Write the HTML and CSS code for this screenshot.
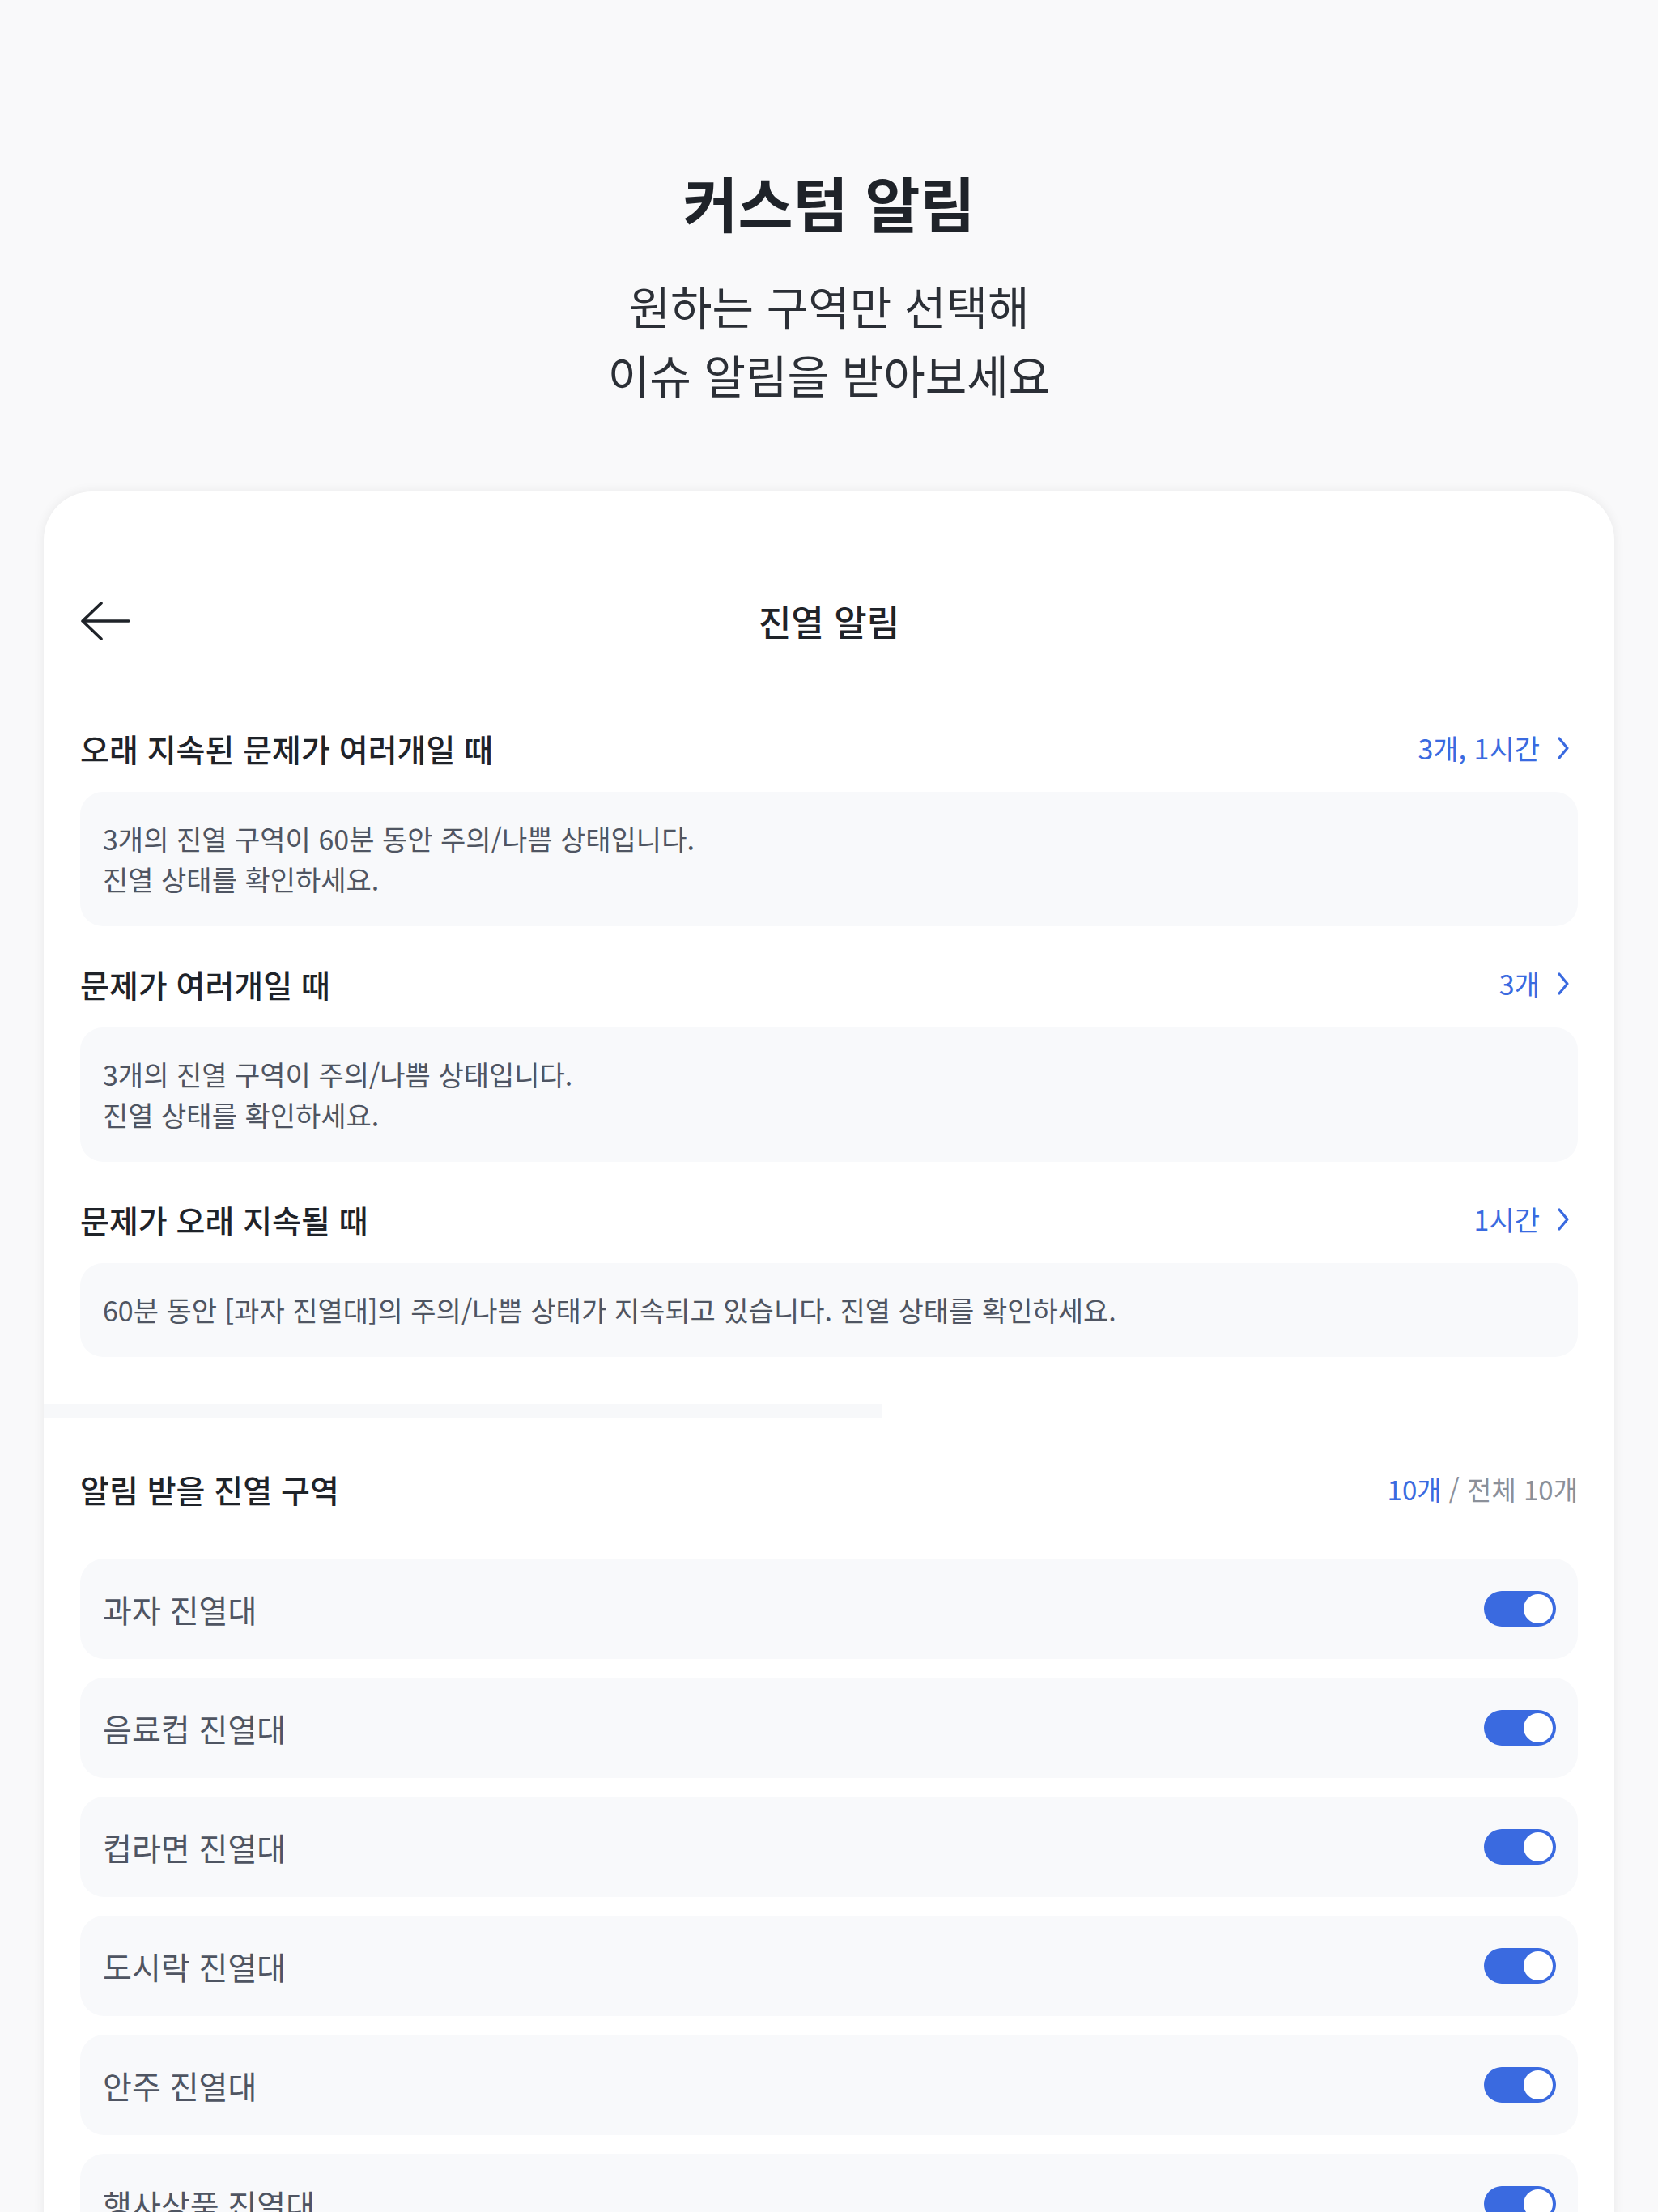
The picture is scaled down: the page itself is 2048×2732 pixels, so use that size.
FILE: index.html
```html
<!DOCTYPE html>
<html lang="ko">
<head>
<meta charset="utf-8">
<title>커스텀 알림</title>
<link rel="stylesheet" href="styles.css">
</head>
<body>
<div class="page">
  <header class="hero">
    <h1 class="hero-title">커스텀 알림</h1>
    <p class="hero-sub">원하는 구역만 선택해<br>이슈 알림을 받아보세요</p>
  </header>

  <main class="card">
    <div class="topbar">
      <div class="topbar-left">
        <svg class="back" width="62" height="50" viewBox="0 0 62 50" aria-hidden="true">
          <path d="M26 3 L3 25 L26 47 M3 25 H60" fill="none" stroke="#1f2329" stroke-width="3.6" stroke-linecap="round" stroke-linejoin="round"/>
        </svg>
      </div>
      <div class="topbar-title">진열 알림</div>
      <div class="topbar-right"></div>
    </div>

    <section class="section">
      <div class="section-head">
        <span class="section-title">오래 지속된 문제가 여러개일 때</span>
        <span class="link">3개, 1시간
          <svg class="chev" width="16" height="30" viewBox="0 0 16 30" aria-hidden="true"><path d="M3 3 L13 15 L3 27" fill="none" stroke="currentColor" stroke-width="3.2" stroke-linecap="round" stroke-linejoin="round"/></svg>
        </span>
      </div>
      <div class="msg">3개의 진열 구역이 60분 동안 주의/나쁨 상태입니다.<br>진열 상태를 확인하세요.</div>
    </section>

    <section class="section">
      <div class="section-head">
        <span class="section-title">문제가 여러개일 때</span>
        <span class="link">3개
          <svg class="chev" width="16" height="30" viewBox="0 0 16 30" aria-hidden="true"><path d="M3 3 L13 15 L3 27" fill="none" stroke="currentColor" stroke-width="3.2" stroke-linecap="round" stroke-linejoin="round"/></svg>
        </span>
      </div>
      <div class="msg">3개의 진열 구역이 주의/나쁨 상태입니다.<br>진열 상태를 확인하세요.</div>
    </section>

    <section class="section">
      <div class="section-head">
        <span class="section-title">문제가 오래 지속될 때</span>
        <span class="link">1시간
          <svg class="chev" width="16" height="30" viewBox="0 0 16 30" aria-hidden="true"><path d="M3 3 L13 15 L3 27" fill="none" stroke="currentColor" stroke-width="3.2" stroke-linecap="round" stroke-linejoin="round"/></svg>
        </span>
      </div>
      <div class="msg">60분 동안 [과자 진열대]의 주의/나쁨 상태가 지속되고 있습니다. 진열 상태를 확인하세요.</div>
    </section>

    <div class="divider"></div>

    <section class="zones">
      <div class="zones-head">
        <span class="section-title">알림 받을 진열 구역</span>
        <span class="count"><span class="count-on">10개</span> / 전체 10개</span>
      </div>
      <ul class="zone-list">
        <li class="zone"><span class="zone-name">과자 진열대</span><span class="toggle"><span class="knob"></span></span></li>
        <li class="zone"><span class="zone-name">음료컵 진열대</span><span class="toggle"><span class="knob"></span></span></li>
        <li class="zone"><span class="zone-name">컵라면 진열대</span><span class="toggle"><span class="knob"></span></span></li>
        <li class="zone"><span class="zone-name">도시락 진열대</span><span class="toggle"><span class="knob"></span></span></li>
        <li class="zone"><span class="zone-name">안주 진열대</span><span class="toggle"><span class="knob"></span></span></li>
        <li class="zone"><span class="zone-name">행사상품 진열대</span><span class="toggle"><span class="knob"></span></span></li>
      </ul>
    </section>
  </main>
</div>
</body>
</html>
```

FILE: styles.css
```css
* {
  box-sizing: border-box;
}

html, body {
  margin: 0;
  padding: 0;
}

body {
  background: #f9f9fa;
  font-family: "Noto Sans CJK KR", "Noto Sans", sans-serif;
  color: #1f2329;
}

.page {
  width: 2048px;
  height: 2732px;
  overflow: hidden;
  display: flex;
  flex-direction: column;
}

.hero {
  padding-top: 206px;
  text-align: center;
}

.hero-title {
  margin: 0;
  font-size: 74px;
  line-height: 86px;
  font-weight: 700;
  color: #1f2329;
}

.hero-sub {
  margin: 42px 0 0;
  font-size: 56px;
  line-height: 85px;
  font-weight: 400;
  color: #2b2f36;
}

.card {
  margin: 103px 54px 0;
  flex: 1;
  background: #ffffff;
  border-radius: 60px 60px 0 0;
  box-shadow: 0 0 14px rgba(0, 0, 0, 0.07);
  padding: 135px 45px 0;
}

.topbar {
  display: grid;
  grid-template-columns: 1fr auto 1fr;
  align-items: center;
  height: 50px;
}

.topbar-left {
  display: flex;
  align-items: center;
}

.back {
  display: block;
}

.topbar-title {
  font-size: 44px;
  line-height: 50px;
  font-weight: 500;
  color: #1f2329;
}

.section {
  margin-top: 106px;
}

.section + .section {
  margin-top: 45px;
}

.section-head,
.zones-head {
  display: flex;
  justify-content: space-between;
  align-items: center;
  height: 52px;
}

.section-head {
  margin-bottom: 28px;
}

.section-title {
  font-size: 39px;
  line-height: 52px;
  font-weight: 500;
  color: #1f2329;
}

.link {
  display: flex;
  align-items: center;
  gap: 21px;
  font-size: 34px;
  line-height: 52px;
  color: #3a6ae0;
  padding-right: 10px;
}

.chev {
  display: block;
}

.msg {
  background: #f8f9fb;
  border-radius: 28px;
  padding: 33px 28px;
  font-size: 34px;
  line-height: 50px;
  color: #4f5562;
}

.divider {
  margin: 58px 0 0 -45px;
  width: 1036px;
  height: 17px;
  background: #f7f8fa;
}

.zones {
  margin-top: 62px;
}

.zones-head {
  margin-bottom: 60px;
}

.count {
  font-size: 33px;
  line-height: 52px;
  color: #8b9099;
}

.count-on {
  color: #3a6ae0;
}

.zone-list {
  list-style: none;
  margin: 0;
  padding: 0;
  display: flex;
  flex-direction: column;
  gap: 23px;
}

.zone {
  height: 124px;
  background: #f8f9fb;
  border-radius: 30px;
  display: flex;
  align-items: center;
  justify-content: space-between;
  padding: 0 27px 0 28px;
}

.zone-name {
  font-size: 39px;
  line-height: 50px;
  color: #4f5562;
}

.toggle {
  width: 89px;
  height: 44px;
  border-radius: 22px;
  background: #3a6ae0;
  display: flex;
  align-items: center;
  justify-content: flex-end;
  padding-right: 4px;
}

.knob {
  width: 36px;
  height: 36px;
  border-radius: 50%;
  background: #ffffff;
}
```
